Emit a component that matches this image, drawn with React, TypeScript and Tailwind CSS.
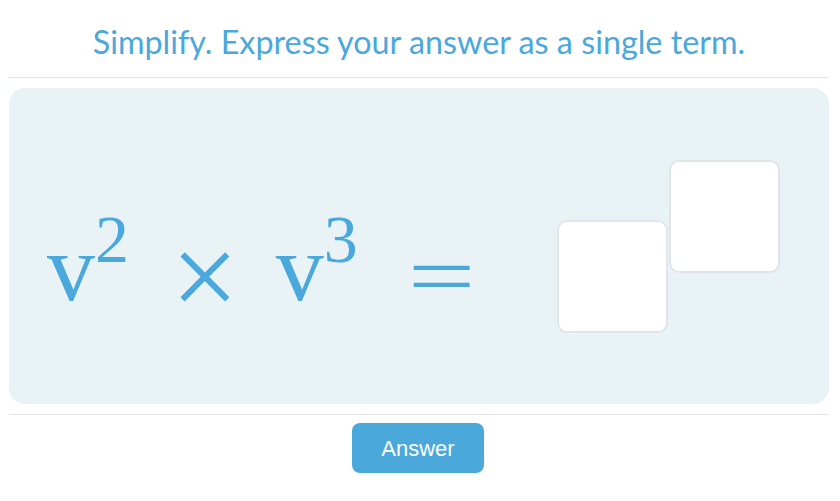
export default function App() {
  return (
    <div className="w-[840px] h-[501px] bg-white font-['Lato',sans-serif]">
      {/* Prompt */}
      <div className="ml-[9px] w-[820px] h-[78px] flex items-center justify-center pt-[8px] border-b border-[#e2e4e6]">
        <h1 className="text-[32.3px] leading-none text-[#4aa8dc]">
          Simplify. Express your answer as a single term.
        </h1>
      </div>

      {/* Question panel */}
      <div className="ml-[9px] mt-[10px] w-[820px] h-[316px] rounded-[16px] bg-[#e9f3f6] flex items-center pl-[38px]">
        <div className="flex items-end">
          <div className="-mb-[4px] whitespace-nowrap font-['Liberation_Serif',serif] text-[#4aa8dc] text-[96px] leading-none">
            <span className="inline-block">v</span>
            <span className="inline-block text-[68px] align-[38px]">2</span>
            <span className="inline-block text-[120px] align-[-17px] ml-[42px]">×</span>
            <span className="inline-block ml-[37px]">v</span>
            <span className="inline-block text-[68px] align-[38px]">3</span>
            <span className="inline-block text-[120px] align-[-17px] scale-y-[0.7] ml-[50px]">=</span>
          </div>
          <div className="flex items-start ml-[82px]">
            <div className="mt-[60px] w-[111px] h-[113px] rounded-[10px] bg-white border-2 border-[#e1e4e8]" />
            <div className="ml-[1px] w-[111px] h-[113px] rounded-[10px] bg-white border-2 border-[#e1e4e8]" />
          </div>
        </div>
      </div>

      {/* Actions */}
      <div className="ml-[9px] mt-[10px] w-[820px] border-t border-[#e2e4e6] flex justify-center pt-[8px]">
        <button className="ml-[-2px] w-[132px] h-[50px] rounded-[8px] bg-[#4ba8db] text-white text-[22px] font-['Liberation_Sans',sans-serif]">
          Answer
        </button>
      </div>
    </div>
  );
}
